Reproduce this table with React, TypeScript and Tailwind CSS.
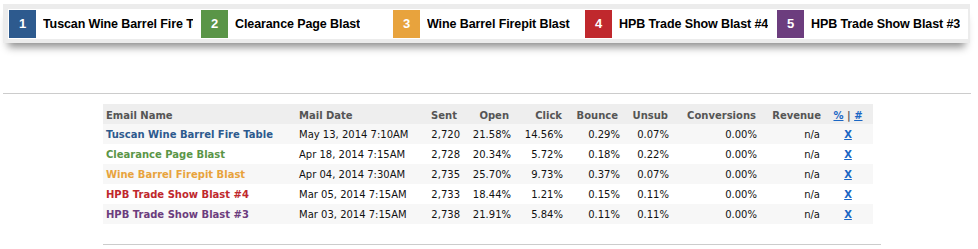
import React from 'react';

type Blast = {
  name: string;
  color: string;
  text: string;
  date: string;
  sent: string;
  open: string;
  click: string;
  bounce: string;
  unsub: string;
};

const blasts: Blast[] = [
  { name: 'Tuscan Wine Barrel Fire Table', color: 'bg-[#2d5a8e]', text: 'text-[#2d5a8e]', date: 'May 13, 2014 7:10AM', sent: '2,720', open: '21.58%', click: '14.56%', bounce: '0.29%', unsub: '0.07%' },
  { name: 'Clearance Page Blast', color: 'bg-[#5a9547]', text: 'text-[#5a9547]', date: 'Apr 18, 2014 7:15AM', sent: '2,728', open: '20.34%', click: '5.72%', bounce: '0.18%', unsub: '0.22%' },
  { name: 'Wine Barrel Firepit Blast', color: 'bg-[#e8a33d]', text: 'text-[#e8a33d]', date: 'Apr 04, 2014 7:30AM', sent: '2,735', open: '25.70%', click: '9.73%', bounce: '0.37%', unsub: '0.07%' },
  { name: 'HPB Trade Show Blast #4', color: 'bg-[#c0282d]', text: 'text-[#c0282d]', date: 'Mar 05, 2014 7:15AM', sent: '2,733', open: '18.44%', click: '1.21%', bounce: '0.15%', unsub: '0.11%' },
  { name: 'HPB Trade Show Blast #3', color: 'bg-[#6c3d7e]', text: 'text-[#6c3d7e]', date: 'Mar 03, 2014 7:15AM', sent: '2,738', open: '21.91%', click: '5.84%', bounce: '0.11%', unsub: '0.11%' },
];

export default function App() {
  return (
    <div className="w-[978px] h-[249px] bg-white overflow-hidden">
      {/* legend bar */}
      <div className="ml-[3px] mt-[4px] w-[967px] bg-[#ececec] pl-[5px] pr-[2px] pt-[5px] pb-[4px] shadow-[0_9px_8px_-5px_rgba(0,0,0,0.45)]">
        <div className="flex bg-white h-[30px] py-px pl-px font-['Liberation_Sans',Arial,sans-serif]">
          {blasts.map((b, i) => (
            <div key={b.name} className="w-[192px] shrink-0 flex items-center pr-[8px]">
              <div className={`w-[27px] h-[28px] shrink-0 flex items-center justify-center text-white font-bold text-[13px] ${b.color}`}>
                {i + 1}
              </div>
              <div className="ml-[7px] min-w-0 overflow-hidden whitespace-nowrap text-[12.5px] tracking-[-0.1px] font-bold text-black">
                {b.name}
              </div>
            </div>
          ))}
        </div>
      </div>

      <div className="mt-[50px] ml-[3px] w-[968px] border-t border-[#cccccc]" />

      <div className="ml-[103px] mt-[10px] font-['DejaVu_Sans',Verdana,sans-serif] text-[10px]">
        <table className="table-fixed border-collapse w-[770px]">
          <colgroup>
            <col className="w-[193px]" />
            <col className="w-[114px]" />
            <col className="w-[52px]" />
            <col className="w-[51px]" />
            <col className="w-[52px]" />
            <col className="w-[57px]" />
            <col className="w-[49px]" />
            <col className="w-[88px]" />
            <col className="w-[64px]" />
            <col className="w-[50px]" />
          </colgroup>
          <thead>
            <tr className="bg-[#eeeeee] h-[20px] text-[#555555] font-bold">
              <th className="text-left pl-[3px] pt-[2px]">Email Name</th>
              <th className="text-left pl-[3px] pt-[2px]">Mail Date</th>
              <th className="text-right pr-[5px] pt-[2px]">Sent</th>
              <th className="text-right pr-[4px] pt-[2px]">Open</th>
              <th className="text-right pr-[3px] pt-[2px]">Click</th>
              <th className="text-right pr-[4px] pt-[2px]">Bounce</th>
              <th className="text-right pr-[3px] pt-[2px]">Unsub</th>
              <th className="text-right pr-[3px] pt-[2px]">Conversions</th>
              <th className="text-right pr-[2px] pt-[2px]">Revenue</th>
              <th className="text-center pt-[2px]">
                <span className="text-[#1a66c4] underline">%</span> | <span className="text-[#1a66c4] underline">#</span>
              </th>
            </tr>
          </thead>
          <tbody>
            {blasts.map((b, i) => (
              <tr key={b.name} className={`h-[20px] text-[#111111] ${i % 2 === 0 ? 'bg-[#f7f7f7]' : 'bg-white'}`}>
                <td className={`pl-[3px] font-bold whitespace-nowrap ${b.text}`}>{b.name}</td>
                <td className="pl-[3px] whitespace-nowrap">{b.date}</td>
                <td className="text-right pr-[2px]">{b.sent}</td>
                <td className="text-right pr-[2px]">{b.open}</td>
                <td className="text-right pr-[2px]">{b.click}</td>
                <td className="text-right pr-[2px]">{b.bounce}</td>
                <td className="text-right pr-[2px]">{b.unsub}</td>
                <td className="text-right pr-[2px]">0.00%</td>
                <td className="text-right pr-[3px]">n/a</td>
                <td className="text-center font-bold">
                  <span className="text-[#1a66c4] underline">X</span>
                </td>
              </tr>
            ))}
          </tbody>
        </table>
      </div>

      <div className="mt-[20px] ml-[103px] w-[778px] border-t border-[#cccccc]" />
    </div>
  );
}
